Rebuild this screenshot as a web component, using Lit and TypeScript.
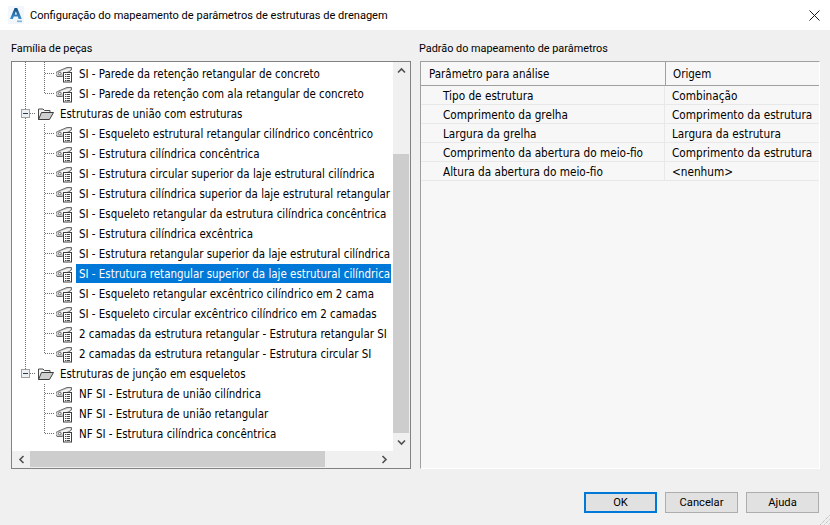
import { LitElement, html, css, svg } from "lit";
import { customElement } from "lit/decorators.js";

type Row = { kind: "leaf" | "folder"; text: string; last?: boolean; selected?: boolean };

const rows: Row[] = [
  { kind: "leaf", text: "SI - Parede da retenção retangular de concreto" },
  { kind: "leaf", text: "SI - Parede da retenção com ala retangular de concreto", last: true },
  { kind: "folder", text: "Estruturas de união com estruturas" },
  { kind: "leaf", text: "SI - Esqueleto estrutural retangular cilíndrico concêntrico" },
  { kind: "leaf", text: "SI - Estrutura cilíndrica concêntrica" },
  { kind: "leaf", text: "SI - Estrutura circular superior da laje estrutural cilíndrica" },
  { kind: "leaf", text: "SI - Estrutura cilíndrica superior da laje estrutural retangular" },
  { kind: "leaf", text: "SI - Esqueleto retangular da estrutura cilíndrica concêntrica" },
  { kind: "leaf", text: "SI - Estrutura cilíndrica excêntrica" },
  { kind: "leaf", text: "SI - Estrutura retangular superior da laje estrutural cilíndrica" },
  { kind: "leaf", text: "SI - Estrutura retangular superior da laje estrutural cilíndrica", selected: true },
  { kind: "leaf", text: "SI - Esqueleto retangular excêntrico cilíndrico em 2 cama" },
  { kind: "leaf", text: "SI - Esqueleto circular excêntrico cilíndrico em 2 camadas" },
  { kind: "leaf", text: "2 camadas da estrutura retangular - Estrutura retangular SI" },
  { kind: "leaf", text: "2 camadas da estrutura retangular - Estrutura circular SI", last: true },
  { kind: "folder", text: "Estruturas de junção em esqueletos", last: true },
  { kind: "leaf", text: "NF SI - Estrutura de união cilíndrica" },
  { kind: "leaf", text: "NF SI - Estrutura de união retangular" },
  { kind: "leaf", text: "NF SI - Estrutura cilíndrica concêntrica", last: true },
];

const params: [string, string][] = [
  ["Tipo de estrutura", "Combinação"],
  ["Comprimento da grelha", "Comprimento da estrutura"],
  ["Largura da grelha", "Largura da estrutura"],
  ["Comprimento da abertura do meio-fio", "Comprimento da estrutura"],
  ["Altura da abertura do meio-fio", "<nenhum>"],
];

function leafIcon() {
  return html`<svg class="ico" width="17" height="17" viewBox="0 0 17 17">
    <path d="M1.5 5.5 L11 1.5 H15.5 V4 L6 10.5 H3 A2.5 2.5 0 0 1 1.5 5.5 Z" fill="#d0d0d0" stroke="#6b6b6b"/>
    <path d="M5 5 L14 2.5 V4 L6 8 Z" fill="#f6f6f6"/>
    <circle cx="3.8" cy="7.6" r="1.3" fill="#fff" stroke="#555" stroke-width=".8"/>
    <rect x="7.5" y="6.5" width="8" height="9.5" fill="#fff" stroke="#3e3e3e"/>
    <path d="M9 8.5h5M9 10.5h5M9 12.5h5M9 14.5h5" stroke="#4a4a4a" stroke-dasharray="1 .6 3.4 0"/>
  </svg>`;
}

function folderIcon() {
  return html`<svg class="ico" width="17" height="14" viewBox="0 0 17 14">
    <path d="M1.5 12.5 V2 H6 L7.5 3.5 H13 V6" fill="#f2f2f2" stroke="#4a4a4a"/>
    <path d="M1.5 12.5 L4.5 5.5 H16.5 L12.5 12.5 Z" fill="#cfcfcf" stroke="#3c3c3c" stroke-linejoin="round"/>
  </svg>`;
}

function guides(r: Row, idx: number) {
  const lastFolder = rows.findIndex((x) => x.kind === "folder" && x.last);
  const trunk = idx < lastFolder;
  if (r.kind === "folder") {
    return html`<svg class="gd" width="25" height="20" viewBox="0 0 25 20">
      ${svg`<path d="M13.5 0V5" stroke="#6e6e6e" stroke-dasharray="1 1"/>`}
      ${r.last ? "" : svg`<path d="M13.5 14V20" stroke="#6e6e6e" stroke-dasharray="1 1"/>`}
      ${svg`<path d="M18 9.5H24" stroke="#6e6e6e" stroke-dasharray="1 1"/>`}
      ${svg`<rect x="9.5" y="5.5" width="8" height="8" fill="#eef1f4" stroke="#a0a0a0"/>`}
      ${svg`<path d="M11 9.5H16" stroke="#2b3a4a"/>`}
    </svg>`;
  }
  return html`<svg class="gd" width="44" height="20" viewBox="0 0 44 20">
    ${trunk ? svg`<path d="M13.5 0V20" stroke="#6e6e6e" stroke-dasharray="1 1"/>` : ""}
    ${svg`<path d="M32.5 0V${r.last ? 10 : 20}" stroke="#6e6e6e" stroke-dasharray="1 1"/>`}
    ${svg`<path d="M33 9.5H43" stroke="#6e6e6e" stroke-dasharray="1 1"/>`}
  </svg>`;
}

@customElement("app-root")
export class AppRoot extends LitElement {
  static styles = css`
    :host {
      display: block;
      width: 830px;
      height: 525px;
      overflow: hidden;
      background: #f0f0f0;
      font-family: "Roboto", "Liberation Sans", sans-serif;
      font-size: 10.85px;
      color: #000;
    }
    .dialog { display: flex; flex-direction: column; height: 525px; }
    .titlebar {
      height: 30px;
      background: #fff;
      display: flex;
      align-items: center;
      padding: 0 10px 0 8px;
      gap: 6px;
      flex: none;
    }
    .titlebar .text { flex: 1; font-size: 11.05px; white-space: nowrap; }
    .body {
      flex: 1;
      display: grid;
      grid-template-columns: 400px 400px;
      column-gap: 9px;
      padding: 0 10px 0 11px;
    }
    .col { display: flex; flex-direction: column; min-width: 0; }
    .label { height: 31px; display: flex; align-items: flex-end; padding-bottom: 5px; box-sizing: border-box; line-height: 14px; }
    .label.r { margin-left: -1px; }
    .tree {
      height: 408px;
      box-sizing: border-box;
      border: 1px solid #828282;
      background: #fff;
      display: grid;
      grid-template-columns: 1fr 17px;
      grid-template-rows: 1fr 17px;
      overflow: hidden;
      font-family: "DejaVu Sans Condensed", "DejaVu Sans", sans-serif;
      font-stretch: condensed;
      font-size: 11.45px;
    }
    .rows { overflow: hidden; min-width: 0; }
    .trim { height: 2px; display: block; }
    .row { display: flex; align-items: center; height: 20px; white-space: nowrap; }
    .gd { flex: none; display: block; }
    .ico { flex: none; display: block; }
    .row .t { line-height: 21px; height: 19px; box-sizing: border-box; align-self: flex-start; }
    .leaf .t { margin-left: 3px; width: 315px; flex: none; padding-left: 3px; }
    .folder .t { margin-left: 6px; }
    .sel .t { background: #0078d7; color: #fff; }
    .vbar {
      background: #f0f0f0;
      display: flex;
      flex-direction: column;
      align-items: stretch;
    }
    .arrow { height: 17px; flex: none; display: flex; align-items: center; justify-content: center; padding-right: 1px; }
    .vtrack { flex: 1; padding: 75px 1px 1px 0; display: flex; }
    .vthumb { flex: 1; background: #cdcdcd; }
    .hbar { background: #f0f0f0; display: flex; align-items: stretch; }
    .harrow { width: 18px; flex: none; display: flex; align-items: center; justify-content: center; }
    .htrack { flex: 1; padding-right: 50px; padding-bottom: 1px; display: flex; }
    .hthumb { flex: 1; background: #cdcdcd; }
    .corner { background: #f0f0f0; }
    .table {
      height: 408px;
      box-sizing: border-box;
      background: #f7f7f7;
      border-top: 1px solid #a0a0a0;
      border-left: 1px solid #a0a0a0;
      border-right: 1px solid #fff;
      border-bottom: 1px solid #fff;
      font-family: "DejaVu Sans Condensed", "DejaVu Sans", sans-serif;
      font-stretch: condensed;
      font-size: 11.7px;
    }
    .thead {
      display: grid;
      grid-template-columns: 245px 1fr;
      height: 24px;
      border-bottom: 1px solid #a0a0a0;
      box-sizing: border-box;
      font-size: 11.5px;
    }
    .thead div { display: flex; align-items: center; padding-left: 8px; }
    .thead div:first-child { border-right: 1px solid #a0a0a0; }
    .thead div:last-child { padding-left: 7px; }
    .trow {
      display: grid;
      grid-template-columns: 244px 1fr;
      height: 19px;
      box-sizing: border-box;
      border-bottom: 1px solid #e8e8e8;
      white-space: nowrap;
    }
    .trow div { display: flex; align-items: center; padding-top: 2px; box-sizing: border-box; }
    .trow div:first-child { padding-left: 22px; border-right: 1px solid #e8e8e8; }
    .trow div:last-child { padding-left: 7px; }
    .footer {
      height: 57px;
      flex: none;
      display: flex;
      justify-content: flex-end;
      align-items: flex-start;
      gap: 8px;
      padding: 23px 11px 0 0;
      box-sizing: border-box;
      position: relative;
    }
    button {
      width: 73px;
      height: 21px;
      box-sizing: border-box;
      background: #e1e1e1;
      border: 1px solid #adadad;
      font: inherit;
      font-size: 11.2px;
      color: #000;
      padding: 0;
    }
    button.def { border: 2px solid #0078d7; }
    .grip { position: absolute; right: 0; bottom: 0; display: block; }
  `;

  render() {
    const chev = (d: string) => html`<svg width="9" height="9" viewBox="0 0 9 9"><path d=${d} fill="none" stroke="#505050" stroke-width="1.6"/></svg>`;
    return html`<div class="dialog">
      <div class="titlebar">
        <svg width="16" height="18" viewBox="0 0 16 18">
          <defs>
            <linearGradient id="lg" x1="0" y1="0" x2="0" y2="1">
              <stop offset="0" stop-color="#134d80"/>
              <stop offset="1" stop-color="#3f8fcf"/>
            </linearGradient>
          </defs>
          <rect width="16" height="18" fill="#f1f7fc"/>
          <path d="M2 13 L6.6 2 H9.2 L13.8 13 H10.6 L9.8 10.6 H5.8 L4.8 13 Z" fill="url(#lg)"/>
          <path d="M6.8 8.4 L7.9 5.3 L9 8.4 Z" fill="#fff"/>
          <rect x="9" y="14.5" width="5" height="1.6" fill="#7fb4de"/>
        </svg>
        <div class="text">Configuração do mapeamento de parâmetros de estruturas de drenagem</div>
        <svg width="11" height="11" viewBox="0 0 11 11"><path d="M.5 .5L10.5 10.5M10.5 .5L.5 10.5" stroke="#1a1a1a"/></svg>
      </div>
      <div class="body">
        <div class="col">
          <div class="label">Família de peças</div>
          <div class="tree">
            <div class="rows">
              <svg class="trim" width="44" height="2" viewBox="0 0 44 2"><path d="M13.5 0V2M32.5 0V2" stroke="#6e6e6e" stroke-dasharray="1 1"/></svg>
              ${rows.map(
                (r, i) => html`<div class="row ${r.kind} ${r.selected ? "sel" : ""}">
                  ${guides(r, i)}
                  ${r.kind === "leaf" ? leafIcon() : folderIcon()}
                  <span class="t">${r.text}</span>
                </div>`
              )}
            </div>
            <div class="vbar">
              <div class="arrow">${chev("M1 6.5L4.5 3L8 6.5")}</div>
              <div class="vtrack"><div class="vthumb"></div></div>
              <div class="arrow">${chev("M1 2.5L4.5 6L8 2.5")}</div>
            </div>
            <div class="hbar">
              <div class="harrow">${chev("M6.5 1L3 4.5L6.5 8")}</div>
              <div class="htrack"><div class="hthumb"></div></div>
              <div class="harrow">${chev("M2.5 1L6 4.5L2.5 8")}</div>
            </div>
            <div class="corner"></div>
          </div>
        </div>
        <div class="col">
          <div class="label r">Padrão do mapeamento de parâmetros</div>
          <div class="table">
            <div class="thead"><div>Parâmetro para análise</div><div>Origem</div></div>
            ${params.map(
              ([a, b]) => html`<div class="trow"><div>${a}</div><div>${b}</div></div>`
            )}
          </div>
        </div>
      </div>
      <div class="footer">
        <button class="def">OK</button>
        <button>Cancelar</button>
        <button>Ajuda</button>
        <svg class="grip" width="12" height="12" viewBox="0 0 12 12">
          <path d="M11.5 1.5L1.5 11.5M11.5 5.5L5.5 11.5M11.5 9.5L9.5 11.5" stroke="#a8a8a8" stroke-dasharray="1 1"/>
        </svg>
      </div>
    </div>`;
  }
}
